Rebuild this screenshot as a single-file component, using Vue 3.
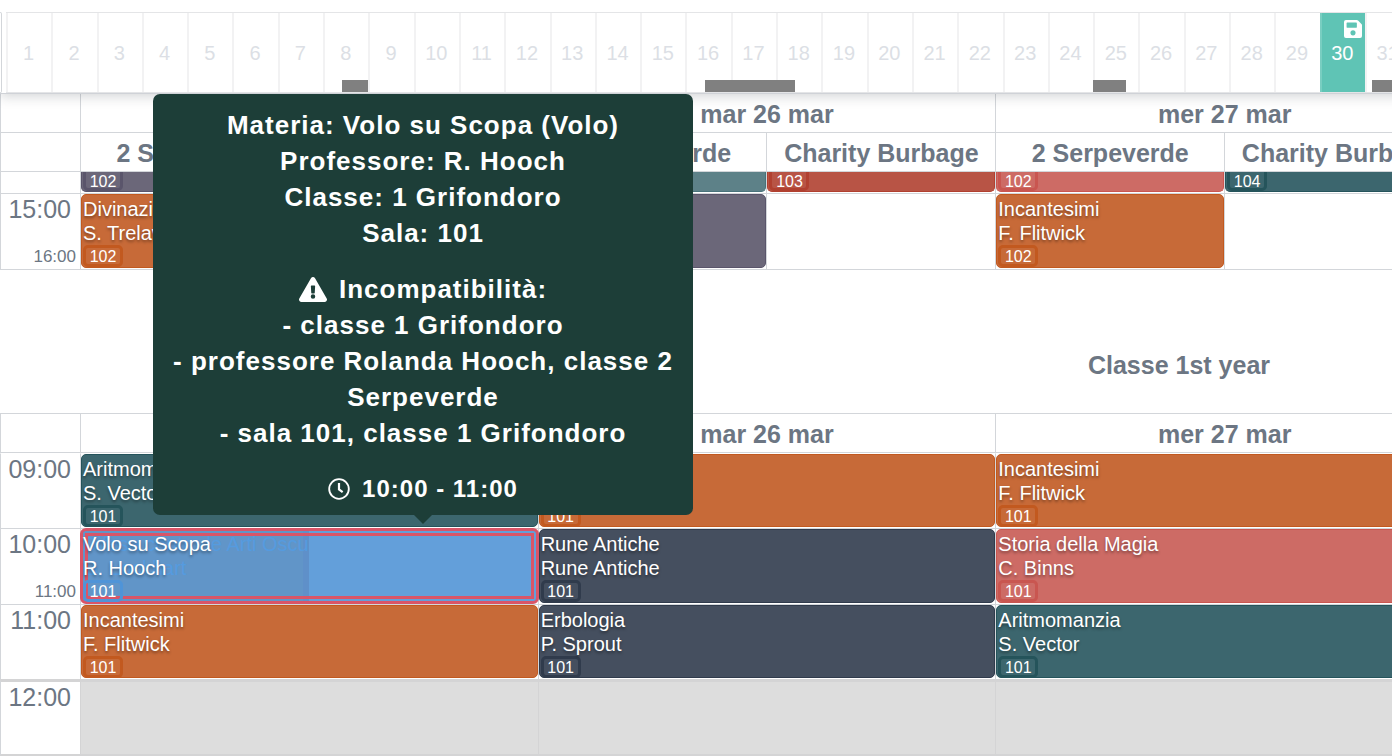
<script setup>
const days = Array.from({ length: 31 }, (_, i) => i + 1)
const selectedDay = 30
const totalDays = 31
const marks = [
  { from: 7.42, to: 8 },
  { from: 15.43, to: 17.42 },
  { from: 24, to: 24.72 },
  { from: 30.16, to: 31 },
]

const dates = ['lun 25 mar', 'mar 26 mar', 'mer 27 mar']
const groups = ['2 Serpeverde', 'Charity Burbage']

const lateSlots = [
  {
    size: 76,
    start: '15:00',
    end: '16:00',
    events: [
      { title: 'Divinazione', teacher: 'S. Trelawney', room: '102', tone: 'orange' },
      null,
      { title: '', teacher: '', room: '', tone: 'purple' },
      null,
      { title: 'Incantesimi', teacher: 'F. Flitwick', room: '102', tone: 'orange' },
      null,
    ],
  },
]
const tailEvents = [
  { room: '102', tone: 'purple' },
  null,
  { room: '', tone: 'mist' },
  { room: '103', tone: 'red' },
  { room: '102', tone: 'pink' },
  { room: '104', tone: 'teal' },
]

const classSlots = [
  {
    size: 75,
    start: '09:00',
    events: [
      { title: 'Aritmomanzia', teacher: 'S. Vector', room: '101', tone: 'teal' },
      { title: '', teacher: '', room: '101', tone: 'orange' },
      { title: 'Incantesimi', teacher: 'F. Flitwick', room: '101', tone: 'orange' },
    ],
  },
  {
    size: 76,
    start: '10:00',
    end: '11:00',
    events: [
      {
        title: 'Volo su Scopa', teacher: 'R. Hooch', room: '101', tone: 'blue', selected: true,
        under: { title: 'Difesa contro le Arti Oscure', teacher: 'G. Lockhart' },
      },
      { title: 'Rune Antiche', teacher: 'Rune Antiche', room: '101', tone: 'navy' },
      { title: 'Storia della Magia', teacher: 'C. Binns', room: '101', tone: 'pink' },
    ],
  },
  {
    size: 75,
    start: '11:00',
    events: [
      { title: 'Incantesimi', teacher: 'F. Flitwick', room: '101', tone: 'orange' },
      { title: 'Erbologia', teacher: 'P. Sprout', room: '101', tone: 'navy' },
      { title: 'Aritmomanzia', teacher: 'S. Vector', room: '101', tone: 'teal' },
    ],
  },
  { size: 77, start: '12:00', closed: true, events: [null, null, null] },
]

const lesson = [
  'Materia: Volo su Scopa (Volo)',
  'Professore: R. Hooch',
  'Classe: 1 Grifondoro',
  'Sala: 101',
]
const conflicts = [
  '- classe 1 Grifondoro',
  '- professore Rolanda Hooch, classe 2 Serpeverde',
  '- sala 101, classe 1 Grifondoro',
]
</script>

<template>
  <main class="page">
    <nav class="timeline">
      <div class="panel-edge"></div>
      <div class="strip">
        <button
          v-for="d in days"
          :key="d"
          type="button"
          class="day"
          :class="{ 'day--active': d === selectedDay }"
        >
          {{ d }}
          <svg v-if="d === selectedDay" class="save" viewBox="0 0 448 448">
            <path
              fill="currentColor"
              fill-rule="evenodd"
              d="M434 98 350 14A48 48 0 0 0 316 0H48A48 48 0 0 0 0 48v352a48 48 0 0 0 48 48h352a48 48 0 0 0 48-48V132a48 48 0 0 0-14-34zM224 384a64 64 0 1 1 0-128 64 64 0 0 1 0 128zM320 79v101a12 12 0 0 1-12 12H76a12 12 0 0 1-12-12V76a12 12 0 0 1 12-12h228a12 12 0 0 1 9 4l3 3a12 12 0 0 1 4 8z"
            />
          </svg>
        </button>
        <i
          v-for="m in marks"
          :key="m.from"
          class="mark"
          :style="{ left: (m.from / totalDays) * 100 + '%', width: ((m.to - m.from) / totalDays) * 100 + '%' }"
        ></i>
      </div>
    </nav>

    <section class="board">
      <table class="grid grid--top">
        <colgroup>
          <col class="col-time" />
          <col v-for="n in 6" :key="n" />
        </colgroup>
        <thead>
          <tr>
            <td class="corner"></td>
            <th v-for="d in dates" :key="d" colspan="2" scope="colgroup">{{ d }}</th>
          </tr>
          <tr>
            <td class="corner"></td>
            <template v-for="d in dates" :key="d">
              <th v-for="g in groups" :key="g" scope="col">{{ g }}</th>
            </template>
          </tr>
        </thead>
        <tbody>
          <tr class="tail">
            <td></td>
            <td v-for="(e, i) in tailEvents" :key="i">
              <div v-if="e" class="event event--tail" :class="'tone-' + e.tone">
                <span v-if="e.room" class="room">{{ e.room }}</span>
              </div>
            </td>
          </tr>
          <tr v-for="s in lateSlots" :key="s.start" class="slot" :style="{ '--slot': s.size + 'px' }">
            <th scope="row" class="time">
              <div class="time-box">
                <span>{{ s.start }}</span>
                <small v-if="s.end">{{ s.end }}</small>
              </div>
            </th>
            <td v-for="(e, i) in s.events" :key="i">
              <div v-if="e" class="event" :class="'tone-' + e.tone">
                <span class="line">{{ e.title }}</span>
                <span class="line">{{ e.teacher }}</span>
                <span v-if="e.room" class="room">{{ e.room }}</span>
              </div>
            </td>
          </tr>
        </tbody>
      </table>

      <h2 class="title">Classe 1st year</h2>

      <table class="grid grid--bottom">
        <colgroup>
          <col class="col-time" />
          <col v-for="n in 3" :key="n" />
        </colgroup>
        <thead>
          <tr>
            <td class="corner"></td>
            <th v-for="d in dates" :key="d" scope="col">{{ d }}</th>
          </tr>
        </thead>
        <tbody>
          <tr
            v-for="s in classSlots"
            :key="s.start"
            class="slot"
            :class="{ 'slot--closed': s.closed }"
            :style="{ '--slot': s.size + 'px' }"
          >
            <th scope="row" class="time">
              <div class="time-box">
                <span>{{ s.start }}</span>
                <small v-if="s.end">{{ s.end }}</small>
              </div>
            </th>
            <td v-for="(e, i) in s.events" :key="i">
              <div v-if="e" class="event" :class="['tone-' + e.tone, { 'event--selected': e.selected }]">
                <div v-if="e.under" class="under">
                  <span class="line">{{ e.under.title }}</span>
                  <span class="line">{{ e.under.teacher }}</span>
                </div>
                <span class="line">{{ e.title }}</span>
                <span class="line">{{ e.teacher }}</span>
                <span v-if="e.room" class="room">{{ e.room }}</span>
              </div>
            </td>
          </tr>
        </tbody>
      </table>
    </section>

    <aside class="tooltip" role="tooltip">
      <div>
        <p v-for="l in lesson" :key="l">{{ l }}</p>
      </div>
      <div>
        <p class="with-icon">
          <svg class="warn" viewBox="0 0 576 512">
            <path
              fill="currentColor"
              fill-rule="evenodd"
              d="M570 440c18 32-5 72-42 72H48c-37 0-60-40-42-72L246 24c19-32 65-32 84 0l240 416zM288 354a46 46 0 1 0 0 92 46 46 0 0 0 0-92zm-44-165 8 136c0 6 5 11 12 11h48c7 0 12-5 12-11l8-136c0-7-5-13-12-13h-64c-7 0-12 6-12 13z"
            />
          </svg>
          Incompatibilità:
        </p>
        <p v-for="c in conflicts" :key="c">{{ c }}</p>
      </div>
      <p class="with-icon hours">
        <svg class="clock" viewBox="0 0 24 24" fill="none" stroke="currentColor" stroke-width="2">
          <circle cx="12" cy="12" r="10.7" />
          <path d="M12 5.5v7l4 3" stroke-width="2.4" />
        </svg>
        10:00 - 11:00
      </p>
    </aside>
  </main>
</template>

<style>
body {
  margin: 0;
  background: #fff;
  overflow: hidden;
}
</style>

<style scoped>
.page {
  position: relative;
  overflow: hidden;
  font-family: "Liberation Sans", Arial, Helvetica, sans-serif;
  color: #6c7683;
}

.timeline {
  position: relative;
  z-index: 1;
  display: flex;
  gap: 4px;
  margin-right: -18px;
  padding-top: 12px;
  border-bottom: 1px solid #cfd2d7;
  background: #fff;
  box-shadow: 0 2px 12px rgba(40, 50, 60, 0.22);
}
.panel-edge {
  box-sizing: border-box;
  width: 2px;
  border: 1px solid #d3d6da;
  border-left: 0;
  border-radius: 0 4px 4px 0;
}
.strip {
  position: relative;
  flex: 1;
  display: flex;
  border-top: 1px solid #e4e5e7;
  border-bottom: 1px solid #e4e5e7;
}
.day {
  position: relative;
  flex: 1 1 0;
  min-width: 0;
  height: 79px;
  padding: 0 2px 0 0;
  border: 0;
  border-left: 2px solid #f2f2f3;
  background: #fff;
  color: #dcdfe5;
  font: inherit;
  font-size: 20px;
  line-height: 24px;
}
.day--active {
  border-left-color: #79cec1;
  background: #5fc4b5;
  color: #fff;
}
.save {
  position: absolute;
  top: 7px;
  right: 3px;
  width: 18px;
  height: 18px;
}
.mark {
  position: absolute;
  bottom: 0;
  height: 12px;
  background: #808080;
}

.board {
  margin-right: -61px;
}
.grid {
  width: 100%;
  table-layout: fixed;
  border-collapse: separate;
  border-spacing: 0;
}
.grid--bottom {
  border-top: 1px solid #d3d6da;
}
.col-time {
  width: 80px;
}
.grid th,
.grid td {
  box-sizing: border-box;
  padding: 0;
  border-left: 1px solid #d3d6da;
  vertical-align: top;
}
.grid thead th,
.corner {
  height: 39px;
  border-bottom: 1px solid #d3d6da;
  font-size: 25px;
  line-height: 36px;
  font-weight: bold;
  text-align: center;
  white-space: nowrap;
}
.grid thead th {
  padding-top: 2px;
}
.tail td {
  height: 21px;
}
.slot > * {
  height: var(--slot);
  border-top: 1px solid #d3d6da;
}
.grid--top .slot > * {
  height: calc(var(--slot) + 1px);
  border-bottom: 1px solid #d3d6da;
}
.grid--bottom .slot:first-child > * {
  border-top-color: transparent;
}
.time {
  font-weight: normal;
}
.time-box {
  display: flex;
  flex-direction: column;
  justify-content: space-between;
  height: calc(var(--slot) - 2px);
  padding-right: 4px;
  text-align: right;
  font-size: 25px;
  line-height: 30px;
}
.time-box span {
  padding-right: 5px;
}
.time-box small {
  font-size: 17px;
  line-height: 22px;
}
.grid .slot--closed > * {
  border-top: 3px solid #d4d4d5;
  border-bottom: 2px solid #d4d4d5;
}
.grid .slot--closed td {
  background: #ddd;
  border-left-color: #d4d4d5;
}
.slot--closed .time-box {
  height: calc(var(--slot) - 5px);
}

.title {
  width: calc(100% + 905px);
  height: 95px;
  margin: 0;
  padding-top: 48px;
  font-size: 25px;
  line-height: 95px;
  text-align: center;
}

.event {
  --fill: #ccc;
  --edge: #aaa;
  position: relative;
  box-sizing: border-box;
  height: calc(var(--slot) - 2px);
  padding: 2px 1px;
  overflow: hidden;
  border: 1px solid var(--edge);
  border-radius: 5px;
  background: var(--fill);
  color: #fff;
  font-size: 20px;
  line-height: 24px;
  text-shadow: 0 2px 3px rgba(0, 0, 0, 0.4);
}
.event--tail {
  display: flex;
  align-items: flex-end;
  height: 20px;
  padding-bottom: 0;
  border-top: 0;
  border-radius: 0 0 5px 5px;
}
.line {
  display: block;
  min-height: 24px;
  white-space: nowrap;
}
.room {
  box-sizing: border-box;
  display: block;
  width: 40px;
  height: 22px;
  border: 3px solid var(--edge);
  border-radius: 5px;
  font-size: 16px;
  line-height: 18px;
  text-align: center;
  text-shadow: none;
}
.event--tail .room {
  height: 26px;
  padding-top: 5px;
  flex: none;
}
.tone-orange { --fill: #c76a38; --edge: #c2591f; }
.tone-teal { --fill: #3c666e; --edge: #25545b; }
.tone-navy { --fill: #454f5f; --edge: #303b4c; }
.tone-pink { --fill: #cd6b65; --edge: #c95650; }
.tone-purple { --fill: #6b6779; --edge: #5a556b; }
.tone-mist { --fill: #5d8188; --edge: #48727a; }
.tone-red { --fill: #b85445; --edge: #b14030; }
.tone-blue { --fill: #639fda; --edge: #4f94d8; }

.event--selected {
  overflow: visible;
  border-color: transparent;
}
.event--selected::before,
.event--selected::after {
  content: "";
  position: absolute;
  z-index: 1;
  border: 3px solid #d95568;
}
.event--selected::before {
  inset: -2px;
  border-radius: 6px;
}
.event--selected::after {
  inset: 3px;
}
.event--selected > .line,
.event--selected > .room {
  position: relative;
  z-index: 2;
}
.under {
  position: absolute;
  inset: 0 50% 0 0;
  box-sizing: border-box;
  padding: 2px 1px;
  overflow: hidden;
  background: #6195c8;
  box-shadow: inset -6px 0 #5f90c9;
  color: #559bdf;
  text-shadow: none;
}

.tooltip {
  position: absolute;
  z-index: 3;
  top: 94px;
  left: 153px;
  box-sizing: border-box;
  width: 540px;
  padding: 13px 16px 8px;
  display: flex;
  flex-direction: column;
  gap: 20px;
  border-radius: 7px;
  background: #1d3e38;
  color: #fff;
  font-size: 26px;
  font-weight: bold;
  line-height: 36px;
  letter-spacing: 1px;
  text-align: center;
}
.tooltip::after {
  content: "";
  position: absolute;
  top: 100%;
  left: 50%;
  margin-left: -9px;
  border: 9px solid transparent;
  border-top-color: #1d3e38;
  border-bottom: 0;
}
.tooltip p {
  margin: 0;
}
.with-icon {
  display: flex;
  align-items: center;
  justify-content: center;
  gap: 12px;
}
.hours {
  font-size: 24px;
}
.warn {
  width: 28px;
  height: 25px;
}
.clock {
  width: 22px;
  height: 22px;
}
</style>
